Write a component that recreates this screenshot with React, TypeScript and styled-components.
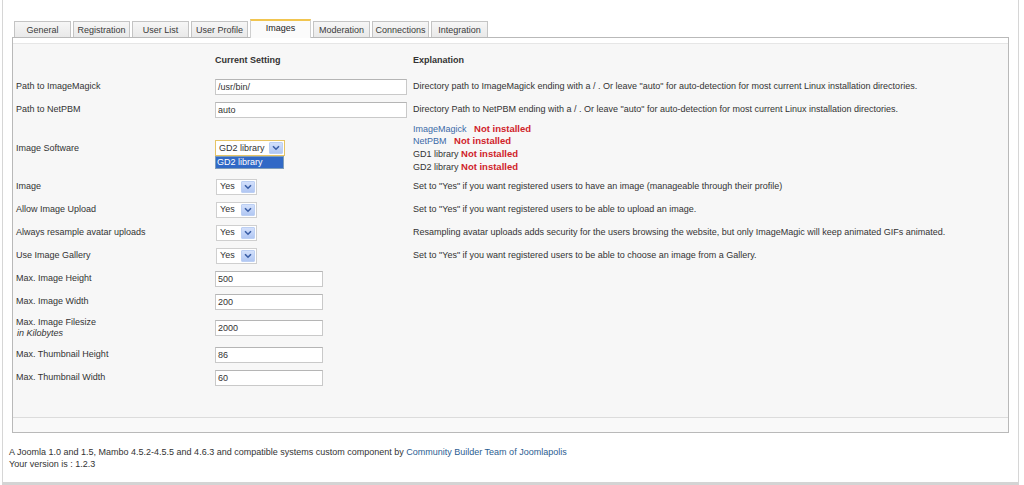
import React from "react";
import styled, { createGlobalStyle, css } from "styled-components";

const GlobalStyle = createGlobalStyle`
  html, body {
    margin: 0;
    padding: 0;
    background: #ffffff;
  }
  body {
    font-family: "Liberation Sans", Arial, sans-serif;
    font-size: 9px;
    color: #333333;
  }
  * { box-sizing: border-box; }
`;

const Frame = styled.div`
  margin-left: 2px;
  width: 1017px;
  height: 485px;
  border-left: 1px solid #d6d6d6;
  border-right: 1px solid #d6d6d6;
  border-bottom: 3px solid #d4d4d4;
  padding: 19px 10px 0 9px;
  display: flex;
  flex-direction: column;
`;

const TabBar = styled.div`
  display: flex;
  align-items: flex-end;
  gap: 2px;
  height: 18px;
  padding-left: 2px;
  position: relative;
  z-index: 1;
`;

const Tab = styled.div<{ $active?: boolean }>`
  width: 57px;
  height: 16px;
  display: flex;
  align-items: center;
  justify-content: center;
  background: linear-gradient(#f6f6f6, #e9e9e9);
  border: 1px solid #c4c4c4;
  border-bottom: none;
  color: #3a3a3a;
  white-space: nowrap;
  ${(p) =>
    p.$active &&
    css`
      width: 61px;
      height: 19px;
      margin-bottom: -1px;
      background: #fbfbfb;
      border-color: #cfcfcf;
      border-top: 2px solid #f1c550;
      padding-bottom: 3px;
      color: #222;
    `}
`;

const Panel = styled.div`
  width: 997px;
  height: 396px;
  border: 1px solid #b9b9b9;
  background: #ffffff;
  padding-top: 5px;
  display: flex;
  flex-direction: column;
`;

const Body = styled.div`
  flex: 1;
  border-top: 1px solid #e6e6e6;
  border-bottom: 1px solid #dcdcdc;
  background: #f7f7f7;
  padding-left: 3px;
  position: relative;
`;

const BottomBand = styled.div`
  height: 14px;
  background: #f9f9f9;
`;

const Grid = styled.div`
  display: grid;
  grid-template-columns: 199px 198px 1fr;
`;

const HeadCell = styled.div`
  height: 31px;
  padding-top: 11px;
  font-weight: bold;
  line-height: 11px;
`;

const Cell = styled.div<{ $h?: number }>`
  min-height: ${(p) => p.$h ?? 23}px;
  display: flex;
  flex-direction: column;
  justify-content: center;
  line-height: 11px;
  position: relative;
`;

const Sub = styled.span`
  font-style: italic;
  padding-left: 1px;
`;

const TextInput = styled.div<{ $w: number }>`
  width: ${(p) => p.$w}px;
  height: 16px;
  border: 1px solid #c9c9c9;
  border-top-color: #b5b5b5;
  background: #ffffff;
  padding-left: 2px;
  line-height: 14px;
  color: #333;
`;

const SelectBox = styled.div<{ $w: number; $focus?: boolean }>`
  width: ${(p) => p.$w}px;
  height: 16px;
  border: 1px solid ${(p) => (p.$focus ? "#e6c466" : "#cfcfcf")};
  background: #ffffff;
  display: flex;
  align-items: center;
  justify-content: space-between;
  padding: 0 1px 0 3px;
  margin-left: ${(p) => (p.$focus ? 0 : 1)}px;
  color: #333;
`;

const ArrowBtn = styled.div`
  width: 14px;
  height: 12px;
  background: linear-gradient(#d3e0fb, #b1c7f3);
  border: 1px solid #bccff3;
  border-radius: 1px;
  display: flex;
  align-items: center;
  justify-content: center;
`;

const DropList = styled.div`
  position: absolute;
  left: 0;
  top: calc(50% + 8px);
  width: 69px;
  height: 13px;
  background: #3169c6;
  color: #ffffff;
  border: 1px solid #7f9db9;
  line-height: 11px;
  padding-left: 1px;
`;

const ExplainList = styled.div`
  display: flex;
  flex-direction: column;
  line-height: 11.6px;
`;

const Blue = styled.span`
  color: #3b6aa8;
`;

const Red = styled.span`
  color: #d0232a;
  font-weight: bold;
  font-size: 9.5px;
`;

const Footer = styled.div`
  padding: 13px 0 0 0;
  margin-left: -3px;
  line-height: 12px;
  color: #333;
`;

const Link = styled.span`
  color: #2b5d91;
`;

const Chevron = () => (
  <ArrowBtn>
    <svg width="8" height="6" viewBox="0 0 8 6">
      <path d="M1 1.2 L4 4.2 L7 1.2" fill="none" stroke="#3a5ea6" strokeWidth="1.6" />
    </svg>
  </ArrowBtn>
);

const Select = ({ value, w, focus }: { value: string; w: number; focus?: boolean }) => (
  <SelectBox $w={w} $focus={focus}>
    <span>{value}</span>
    <Chevron />
  </SelectBox>
);

const tabs = [
  "General",
  "Registration",
  "User List",
  "User Profile",
  "Images",
  "Moderation",
  "Connections",
  "Integration",
];

type Row = {
  label: React.ReactNode;
  control: React.ReactNode;
  explain?: React.ReactNode;
  h?: number;
};

const rows: Row[] = [
  {
    label: "Path to ImageMagick",
    control: <TextInput $w={192}>/usr/bin/</TextInput>,
    explain:
      'Directory path to ImageMagick ending with a / . Or leave "auto" for auto-detection for most current Linux installation directories.',
  },
  {
    label: "Path to NetPBM",
    control: <TextInput $w={192}>auto</TextInput>,
    explain:
      'Directory Path to NetPBM ending with a / . Or leave "auto" for auto-detection for most current Linux installation directories.',
  },
  {
    label: "Image Software",
    h: 54,
    control: (
      <>
        <Select value="GD2 library" w={70} focus />
        <DropList>GD2 library</DropList>
      </>
    ),
    explain: (
      <ExplainList>
        <div>
          <Blue>ImageMagick</Blue>&nbsp;&nbsp; <Red>Not installed</Red>
        </div>
        <div>
          <Blue>NetPBM</Blue>&nbsp;&nbsp; <Red>Not installed</Red>
        </div>
        <div>
          GD1 library <Red>Not installed</Red>
        </div>
        <div>
          GD2 library <Red>Not installed</Red>
        </div>
      </ExplainList>
    ),
  },
  {
    label: "Image",
    control: <Select value="Yes" w={41} />,
    explain: 'Set to "Yes" if you want registered users to have an image (manageable through their profile)',
  },
  {
    label: "Allow Image Upload",
    control: <Select value="Yes" w={41} />,
    explain: 'Set to "Yes" if you want registered users to be able to upload an image.',
  },
  {
    label: "Always resample avatar uploads",
    control: <Select value="Yes" w={41} />,
    explain:
      "Resampling avatar uploads adds security for the users browsing the website, but only ImageMagic will keep animated GIFs animated.",
  },
  {
    label: "Use Image Gallery",
    control: <Select value="Yes" w={41} />,
    explain: 'Set to "Yes" if you want registered users to be able to choose an image from a Gallery.',
  },
  { label: "Max. Image Height", control: <TextInput $w={108}>500</TextInput> },
  { label: "Max. Image Width", control: <TextInput $w={108}>200</TextInput> },
  {
    label: (
      <>
        <span>Max. Image Filesize</span>
        <Sub>in Kilobytes</Sub>
      </>
    ),
    h: 30,
    control: <TextInput $w={108}>2000</TextInput>,
  },
  { label: "Max. Thumbnail Height", control: <TextInput $w={108}>86</TextInput> },
  { label: "Max. Thumbnail Width", control: <TextInput $w={108}>60</TextInput> },
];

export default function App() {
  return (
    <>
      <GlobalStyle />
      <Frame>
        <TabBar>
          {tabs.map((t) => (
            <Tab key={t} $active={t === "Images"}>
              {t}
            </Tab>
          ))}
        </TabBar>
        <Panel>
          <Body>
            <Grid>
              <HeadCell />
              <HeadCell>Current Setting</HeadCell>
              <HeadCell>Explanation</HeadCell>
              {rows.map((r, i) => (
                <React.Fragment key={i}>
                  <Cell $h={r.h}>{r.label}</Cell>
                  <Cell $h={r.h}>{r.control}</Cell>
                  <Cell $h={r.h}>{r.explain}</Cell>
                </React.Fragment>
              ))}
            </Grid>
          </Body>
          <BottomBand />
        </Panel>
        <Footer>
          <div>
            A Joomla 1.0 and 1.5, Mambo 4.5.2-4.5.5 and 4.6.3 and compatible systems custom component by{" "}
            <Link>Community Builder Team of Joomlapolis</Link>
          </div>
          <div>Your version is : 1.2.3</div>
        </Footer>
      </Frame>
    </>
  );
}
